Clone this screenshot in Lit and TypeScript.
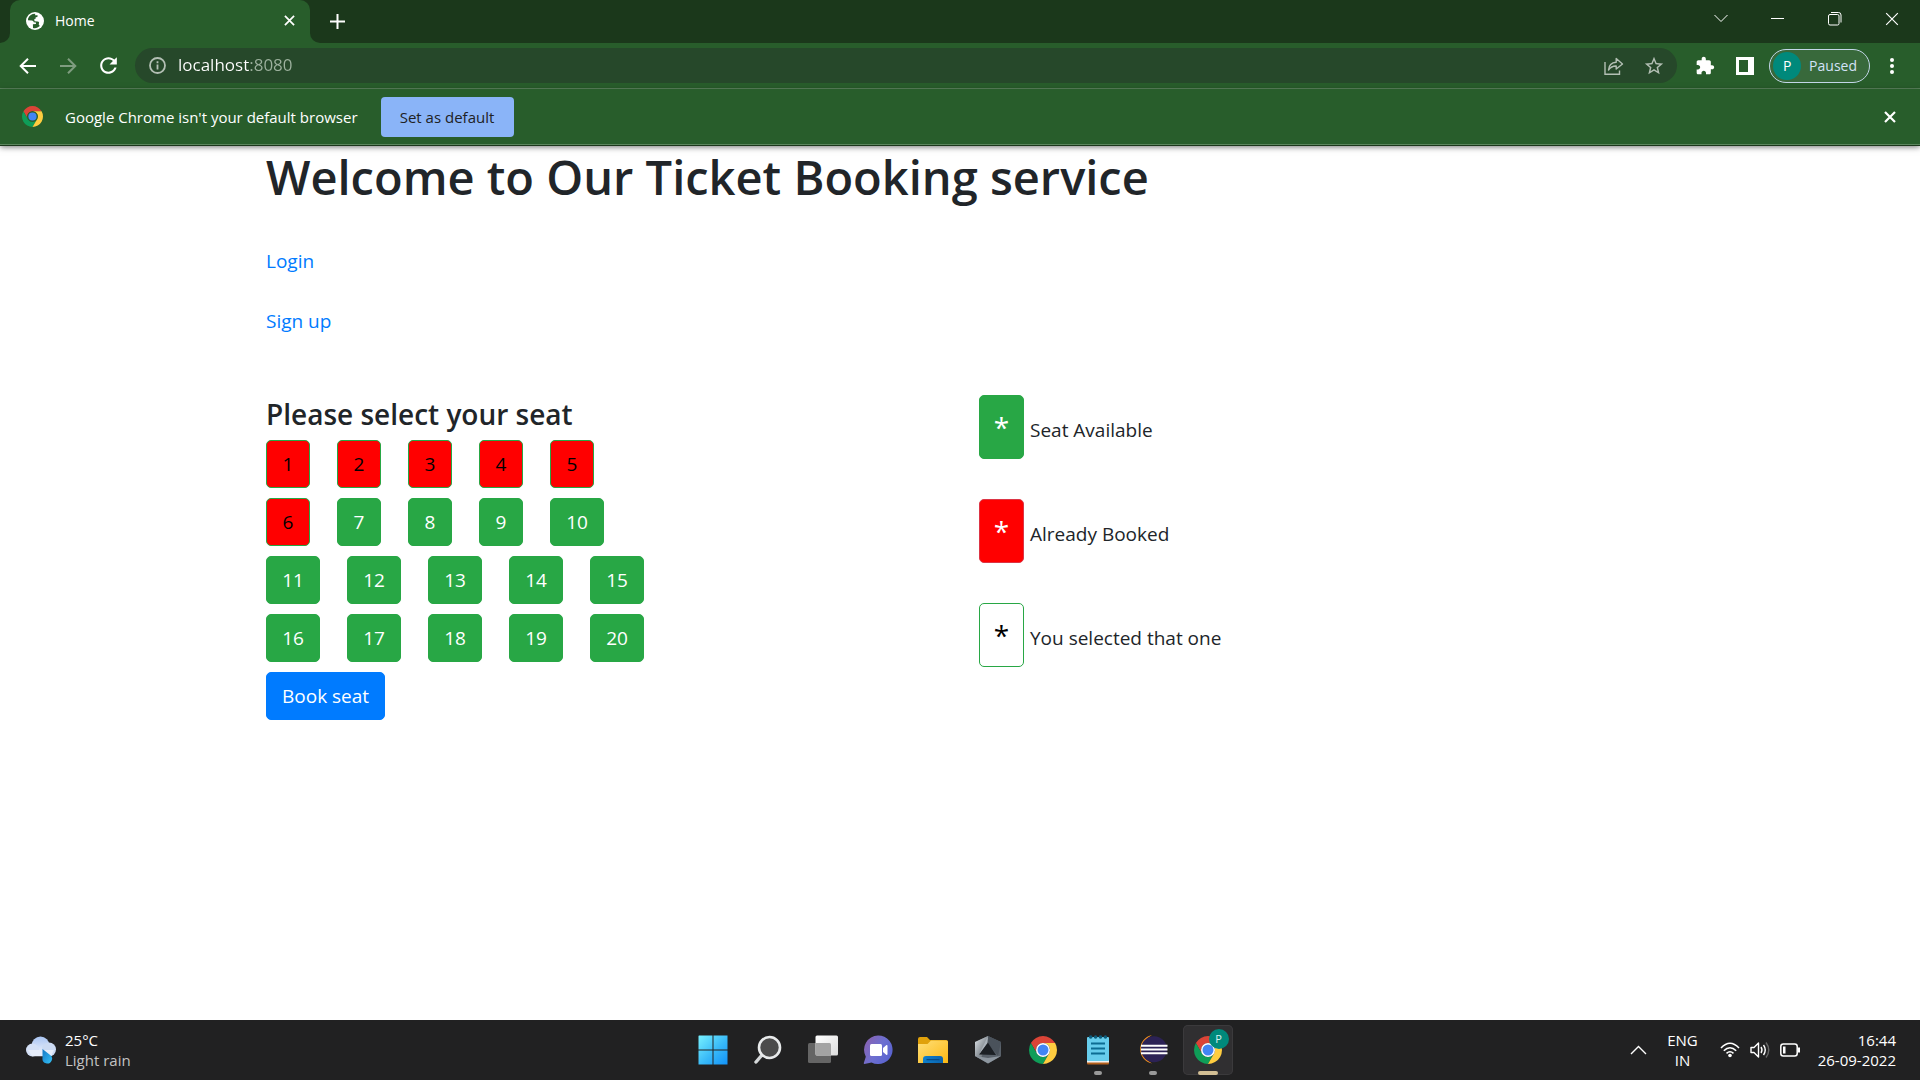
import { LitElement, html, svg, css, nothing } from "lit";
import { customElement, property, state } from "lit/decorators.js";

/* ---------- shared drawings ---------- */

const chromeLogo = (size: number, ringed: boolean) => html`
  <svg width=${size} height=${size} viewBox="0 0 24 24" aria-hidden="true">
    <path fill="#db4437" d="M12 6H22.39A12 12 0 0 0 1.61 6L6.8 15A6 6 0 0 1 12 6z" />
    <path fill="#0f9d58" d="M6.8 15L1.61 6A12 12 0 0 0 12 24L17.2 15A6 6 0 0 1 6.8 15z" />
    <path fill="#ffcd40" d="M17.2 15L12 24A12 12 0 0 0 22.39 6H12A6 6 0 0 1 17.2 15z" />
    <circle cx="12" cy="12" r="6" fill=${ringed ? "#fff" : "#285d2b"} />
    <circle cx="12" cy="12" r="4.7" fill="#4285f4" />
  </svg>
`;

const cross = (size: number, width: number) => html`
  <svg width=${size} height=${size} viewBox="0 0 12 12" fill="none" stroke="currentColor" stroke-width=${width} aria-hidden="true">
    <path d="M1 1L11 11M11 1L1 11" />
  </svg>
`;

/* ---------- browser window frame ---------- */

@customElement("browser-frame")
export class BrowserFrame extends LitElement {
  static styles = css`
    :host {
      display: block;
      color: #fff;
      background: #285d2b;
      font-family: "Open Sans", "Noto Sans", sans-serif;
      font-size: 14px;
      line-height: 20px;
    }
    button {
      font: inherit;
      color: inherit;
      background: none;
      border: 0;
      padding: 0;
      display: flex;
      align-items: center;
      justify-content: center;
    }
    svg {
      display: block;
      flex: none;
    }
    .strip {
      display: flex;
      height: 43px;
    }
    .stub {
      width: 10px;
      background: #1b381b;
      border-bottom-right-radius: 10px;
    }
    .slot {
      width: 300px;
      background: #1b381b;
    }
    .tab {
      height: 43px;
      box-sizing: border-box;
      display: flex;
      align-items: center;
      gap: 11px;
      padding: 0 11px 2px 16px;
      background: #285d2b;
      border-radius: 10px 10px 0 0;
    }
    .tab-title {
      flex: 1;
    }
    .tab-close {
      width: 20px;
      height: 20px;
    }
    .rest {
      flex: 1;
      display: flex;
      justify-content: space-between;
      background: #1b381b;
      border-bottom-left-radius: 10px;
    }
    .new-tab {
      width: 55px;
      height: 42px;
    }
    .window-controls {
      display: flex;
    }
    .window-controls button {
      width: 57px;
      height: 37px;
    }
    .toolbar {
      display: flex;
      align-items: center;
      height: 45px;
      padding: 0 11px 0 8px;
      border-bottom: 1px solid #5b855d;
    }
    .nav {
      width: 40px;
      height: 35px;
    }
    .nav.off {
      color: #7f9d80;
    }
    .omnibox {
      flex: 1;
      display: flex;
      align-items: center;
      height: 35px;
      margin: 0 8px 0 7px;
      padding-left: 12px;
      border-radius: 18px;
      background: #26482a;
      color: #b3bfb4;
    }
    .omnibox button {
      width: 40px;
      height: 35px;
    }
    .omnibox .info {
      width: 20px;
    }
    .omnibox .star {
      margin-right: 3px;
    }
    .address {
      flex: 1;
      min-width: 0;
      margin-left: 11px;
      padding: 0 0 2px;
      border: 0;
      outline: 0;
      font: 17px/26px "Open Sans", "Noto Sans", sans-serif;
      color: transparent;
      background: linear-gradient(to right, #fff 71px, #9db19e 71px);
      background-clip: text;
      -webkit-background-clip: text;
    }
    .profile {
      height: 34px;
      margin: 0 5px 0 4px;
      padding: 0 12px 0 3px;
      gap: 8px;
      border: 1px solid #c3d6e8;
      border-radius: 17px;
      background: #38693b;
      color: #d3e3f8;
      box-sizing: border-box;
    }
    .avatar {
      width: 28px;
      height: 28px;
      line-height: 28px;
      border-radius: 50%;
      background: #00897b;
      color: #fff;
      text-align: center;
    }
    .menu {
      width: 34px;
      height: 34px;
    }
    .notice {
      display: flex;
      align-items: center;
      height: 55px;
      padding: 0 20px 0 22px;
      border-bottom: 1px solid #5b855d;
      box-shadow: 0 1px 0 #1b381b, 0 2px 6px rgba(0, 0, 0, 0.55);
      font-size: 15px;
    }
    .notice-text {
      margin: 0 23px 0 22px;
    }
    .set-default {
      width: 133px;
      height: 40px;
      border-radius: 4px;
      background: #8ab4f8;
      color: #202124;
    }
    .dismiss {
      width: 20px;
      height: 20px;
      margin-left: auto;
    }
  `;

  @property() tabTitle = "Home";
  @property() address = "localhost:8080";
  @state() private noticeOpen = true;

  render() {
    return html`
      <div class="strip">
        <div class="stub"></div>
        <div class="slot">
          <div class="tab">
            <svg width="18" height="18" viewBox="0 0 18 18" aria-hidden="true">
              <circle cx="9" cy="9" r="9" fill="#fff" />
              <path fill="#285d2b" d="M9.2 1.8C6 1.7 3.2 3.6 2.1 6.4L2 8.3L5.9 8.4Q7.6 8.6 7.8 10.2L9.9 10.4L10 12.1L6.9 12.3L7 15.9C9.5 16.6 12 15.8 13.8 14.1L12.7 12.6L13.1 10.6Q12.9 9.5 11.6 9.4L8.5 9.3L8.3 7L9.6 6.7L9.7 5.2L11.4 4.9L11.6 3.3L9.1 3.2Z" />
            </svg>
            <span class="tab-title">${this.tabTitle}</span>
            <button class="tab-close" type="button" aria-label="Close tab">${cross(11, 1.9)}</button>
          </div>
        </div>
        <div class="rest">
          <button class="new-tab" type="button" aria-label="New tab">
            <svg width="15" height="15" viewBox="0 0 15 15" stroke="#fff" stroke-width="2"><path d="M7.5 0V15M0 7.5H15" /></svg>
          </button>
          <div class="window-controls">
            <button type="button" aria-label="Search tabs">
              <svg width="14" height="9" viewBox="0 0 14 9" fill="none" stroke="#fff"><path d="M.5 1L7 7.500L13.500 1" /></svg>
            </button>
            <button type="button" aria-label="Minimize">
              <svg width="13" height="1" viewBox="0 0 13 1"><rect width="13" height="1" fill="#fff" /></svg>
            </button>
            <button type="button" aria-label="Restore">
              <svg width="14" height="14" viewBox="0 0 14 14" fill="none" stroke="#fff">
                <rect x=".5" y="2.500" width="10.500" height="10.500" rx="1.500" />
                <path d="M3 .5H10.500Q13 .5 13 3V10.500" />
              </svg>
            </button>
            <button type="button" aria-label="Close window">${cross(14, 1)}</button>
          </div>
        </div>
      </div>

      <div class="toolbar">
        <button class="nav" type="button" aria-label="Back">
          <svg width="18" height="16" viewBox="0 0 18 16" fill="none" stroke="currentColor" stroke-width="2"><path d="M17 8H2M9 .7L1.700 8L9 15.300" /></svg>
        </button>
        <button class="nav off" type="button" aria-label="Forward">
          <svg width="18" height="16" viewBox="0 0 18 16" fill="none" stroke="currentColor" stroke-width="2"><path d="M1 8H16M9 .7L16.300 8L9 15.300" /></svg>
        </button>
        <button class="nav" type="button" aria-label="Reload">
          <svg width="25" height="25" viewBox="0 0 24 24" fill="#fff"><path d="M17.650 6.350C16.200 4.900 14.210 4 12 4c-4.420 0-7.990 3.580-7.990 8s3.570 8 7.990 8c3.730 0 6.840-2.550 7.730-6h-2.080c-.82 2.330-3.040 4-5.650 4-3.310 0-6-2.690-6-6s2.690-6 6-6c1.660 0 3.140.69 4.220 1.780L13 11h7V4l-2.350 2.350z" /></svg>
        </button>
        <div class="omnibox">
          <button class="info" type="button" aria-label="Site information">
            <svg width="17" height="17" viewBox="0 0 17 17" fill="none" stroke="currentColor" stroke-width="1.800">
              <circle cx="8.500" cy="8.500" r="7.500" />
              <path d="M8.500 7.500V12.500M8.500 4.300V6.200" />
            </svg>
          </button>
          <input class="address" type="text" aria-label="Address" spellcheck="false" .value=${this.address} />
          <button type="button" aria-label="Share">
            <svg width="20" height="18" viewBox="0 0 20 18" fill="none" stroke="currentColor" stroke-width="1.400">
              <path d="M1 5V17.200H15.500V13.500" />
              <path d="M4.500 13Q5 5.700 12.200 5.200V1.500L18.500 7L12.200 12V9Q7.500 8.800 4.500 13Z" stroke-linejoin="round" />
            </svg>
          </button>
          <button class="star" type="button" aria-label="Bookmark">
            <svg width="22" height="22" viewBox="0 0 24 24" fill="currentColor"><path d="M22 9.240l-7.190-.62L12 2 9.190 8.630 2 9.240l5.460 4.730L5.820 21 12 17.270 18.180 21l-1.630-7.030L22 9.240zM12 15.400l-3.760 2.270 1-4.280-3.320-2.880 4.380-.38L12 6.100l1.710 4.040 4.380.38-3.320 2.880 1 4.280L12 15.400z" /></svg>
          </button>
        </div>
        <button class="nav" type="button" aria-label="Extensions">
          <svg width="20" height="20" viewBox="0 0 24 24" fill="#fff"><path d="M20.500 11H19V7c0-1.100-.9-2-2-2h-4V3.500C13 2.120 11.880 1 10.500 1S8 2.120 8 3.500V5H4c-1.100 0-1.990.9-1.990 2v3.800H3.500c1.490 0 2.700 1.210 2.700 2.700s-1.210 2.700-2.700 2.700H2V20c0 1.100.9 2 2 2h3.800v-1.500c0-1.490 1.210-2.700 2.700-2.700 1.490 0 2.700 1.210 2.700 2.700V22H17c1.100 0 2-.9 2-2v-4h1.500c1.380 0 2.500-1.120 2.500-2.500S21.880 11 20.500 11z" /></svg>
        </button>
        <button class="nav" type="button" aria-label="Side panel">
          <svg width="18" height="18" viewBox="0 0 18 18"><path fill="#fff" fill-rule="evenodd" d="M0 0H18V18H0ZM3 3V15H12V3Z" /></svg>
        </button>
        <button class="profile" type="button">
          <span class="avatar">P</span>
          <span>Paused</span>
        </button>
        <button class="menu" type="button" aria-label="Menu">
          <svg width="4" height="16" viewBox="0 0 4 16" fill="#fff"><circle cx="2" cy="2" r="2" /><circle cx="2" cy="8" r="2" /><circle cx="2" cy="14" r="2" /></svg>
        </button>
      </div>

      ${this.noticeOpen
        ? html`
            <div class="notice">
              ${chromeLogo(21, false)}
              <span class="notice-text">Google Chrome isn't your default browser</span>
              <button class="set-default" type="button">Set as default</button>
              <button class="dismiss" type="button" aria-label="Dismiss" @click=${() => (this.noticeOpen = false)}>${cross(12, 2.2)}</button>
            </div>
          `
        : nothing}
    `;
  }
}

/* ---------- booking page ---------- */

type SeatState = "free" | "booked" | "selected";

@customElement("booking-page")
export class BookingPage extends LitElement {
  static styles = css`
    :host {
      display: block;
      color: #212529;
      font-family: "Open Sans", "Noto Sans", sans-serif;
      font-size: 19px;
      line-height: 30px;
    }
    .container {
      max-width: 1388px;
      margin: 0 auto;
      padding-top: 2px;
    }
    h1 {
      margin: 0;
      font-size: 47px;
      line-height: 60px;
      font-weight: 600;
    }
    .links {
      display: flex;
      flex-direction: column;
      align-items: flex-start;
      gap: 30px;
      margin: 39px 0 59px;
    }
    a {
      color: #007bff;
      text-decoration: none;
    }
    .columns {
      display: grid;
      grid-template-columns: 1fr 1fr;
      gap: 38px;
    }
    h2 {
      margin: 0 0 8px;
      padding-top: 1px;
      font-size: 28px;
      line-height: 36px;
      font-weight: 600;
    }
    .booking {
      display: flex;
      flex-direction: column;
      align-items: flex-start;
      gap: 10px;
    }
    .row {
      display: flex;
      gap: 27px;
    }
    button {
      height: 48px;
      box-sizing: border-box;
      padding: 0 15px;
      border: 1px solid #28a745;
      border-radius: 5px;
      background: #28a745;
      color: #fff;
      font: inherit;
      text-align: center;
    }
    .seat {
      min-width: 44px;
      padding: 0;
    }
    .seat.wide {
      min-width: 54px;
    }
    .booked {
      background: #f00;
      color: #000;
    }
    .selected {
      background: #fff;
      color: #000;
    }
    .submit {
      border-color: #007bff;
      background: #007bff;
    }
    .legend {
      display: flex;
      flex-direction: column;
      gap: 39px;
      margin: 0;
      padding: 0;
      list-style: none;
    }
    .entry {
      display: flex;
      align-items: center;
      gap: 6px;
      padding-bottom: 1px;
    }
    .entry label {
      padding-top: 6px;
    }
    .swatch {
      width: 45px;
      height: 64px;
      padding: 0;
      font-size: 28px;
    }
    .swatch.booked {
      border-color: #dc3545;
      color: #fff;
    }
  `;

  @state() private booked = new Set([1, 2, 3, 4, 5, 6]);
  @state() private chosen = new Set<number>();

  private stateOf(n: number): SeatState {
    return this.booked.has(n) ? "booked" : this.chosen.has(n) ? "selected" : "free";
  }

  private toggle(n: number) {
    if (this.booked.has(n)) return;
    const next = new Set(this.chosen);
    if (!next.delete(n)) next.add(n);
    this.chosen = next;
  }

  private book() {
    this.booked = new Set([...this.booked, ...this.chosen]);
    this.chosen = new Set();
  }

  private seat(n: number) {
    return html`<button
      class="seat ${n > 9 ? "wide" : ""} ${this.stateOf(n)}"
      type="button"
      @click=${() => this.toggle(n)}
    >${n}</button>`;
  }

  render() {
    const rows = [0, 5, 10, 15].map((start) => [1, 2, 3, 4, 5].map((i) => start + i));
    const legend: [SeatState, string][] = [
      ["free", "Seat Available"],
      ["booked", "Already Booked"],
      ["selected", "You selected that one"],
    ];
    return html`
      <main class="container">
        <h1>Welcome to Our Ticket Booking service</h1>
        <nav class="links">
          <a href="/login">Login</a>
          <a href="/signup">Sign up</a>
        </nav>
        <div class="columns">
          <section>
            <h2>Please select your seat</h2>
            <div class="booking">
              ${rows.map((row) => html`<div class="row">${row.map((n) => this.seat(n))}</div>`)}
              <button class="submit" type="button" @click=${this.book}>Book seat</button>
            </div>
          </section>
          <ul class="legend">
            ${legend.map(
              ([kind, label]) => html`
                <li class="entry">
                  <button class="swatch ${kind}" id=${kind} type="button">*</button>
                  <label for=${kind}>${label}</label>
                </li>
              `
            )}
          </ul>
        </div>
      </main>
    `;
  }
}

/* ---------- desktop task bar ---------- */

@customElement("task-bar")
export class TaskBar extends LitElement {
  static styles = css`
    :host {
      display: grid;
      grid-template-columns: 1fr auto 1fr;
      align-items: center;
      height: 60px;
      background: #212122;
      color: #fff;
      font-family: "Open Sans", "Noto Sans", sans-serif;
      font-size: 15px;
      line-height: 20px;
    }
    button {
      font: inherit;
      color: inherit;
      background: none;
      border: 0;
      padding: 0;
    }
    svg {
      display: block;
    }
    .weather {
      justify-self: start;
      display: flex;
      align-items: center;
      gap: 9px;
      margin-left: 26px;
      text-align: left;
    }
    .lines {
      display: flex;
      flex-direction: column;
    }
    .dim {
      color: #c3c3c3;
    }
    .apps {
      display: flex;
      gap: 5px;
    }
    .app {
      display: grid;
      grid-template-rows: 1fr 4px;
      justify-items: center;
      align-items: center;
      width: 50px;
      height: 50px;
      box-sizing: border-box;
      padding-top: 4px;
      border-radius: 5px;
    }
    .active {
      background: #302f31;
      box-shadow: inset 0 0 0 1px #3b3a3c;
    }
    .mark {
      width: 8px;
      height: 4px;
      border-radius: 2px;
      background: #999;
      visibility: hidden;
    }
    .running .mark {
      visibility: visible;
    }
    .active .mark {
      width: 20px;
      background: #d3bf94;
    }
    .picture {
      position: relative;
    }
    .badge {
      position: absolute;
      left: 15px;
      top: -7px;
      width: 20px;
      height: 20px;
      border-radius: 50%;
      background: #00897b;
      color: #d9f2ef;
      font-size: 11px;
      line-height: 20px;
      text-align: center;
    }
    .tray {
      justify-self: end;
      display: flex;
      align-items: center;
      margin-right: 24px;
    }
    .language {
      margin: 0 22px 0 20px;
      text-align: center;
    }
    .status {
      display: flex;
      align-items: center;
      gap: 10px;
      margin-right: 18px;
    }
    .clock {
      text-align: right;
    }
  `;

  private icons = [
    {
      name: "Start",
      art: svg`
        <defs><linearGradient id="win" x1="0" y1="0" x2="30" y2="30" gradientUnits="userSpaceOnUse"><stop stop-color="#7af3ff" /><stop offset=".55" stop-color="#38b9f8" /><stop offset="1" stop-color="#1090f8" /></linearGradient></defs>
        <path fill="url(#win)" d="M1 .5H14.500V14.500H.5V1ZM15.500 .5H29.500V14.500H15.500ZM.5 15.500H14.500V29.500H.5ZM15.500 15.500H29.500V29.500H15.500Z" />`,
    },
    {
      name: "Search",
      art: svg`
        <path d="M9 20L3 27" stroke="#d5d8da" stroke-width="3.400" stroke-linecap="round" />
        <circle cx="16.500" cy="12.500" r="10.500" fill="#4b4b4b" stroke="#e8eaeb" stroke-width="2.600" />`,
    },
    {
      name: "Task view",
      art: svg`
        <defs><linearGradient id="tv" x1="0" y1="0" x2="1" y2="1"><stop stop-color="#fff" /><stop offset="1" stop-color="#dcdcdc" /></linearGradient></defs>
        <rect x="0" y="8" width="23" height="20" rx="1.500" fill="#656565" />
        <rect x="7.500" y=".5" width="22.500" height="20" rx="1.500" fill="url(#tv)" />
        <path d="M7.500 8H21.500Q23 8 23 9.500V20.500H9Q7.500 20.500 7.500 19Z" fill="#a3a3a3" />`,
    },
    {
      name: "Chat",
      art: svg`
        <defs><linearGradient id="chat" x1="0" y1=".2" x2="1" y2=".8"><stop stop-color="#8a62b0" /><stop offset=".5" stop-color="#6d6fd0" /><stop offset="1" stop-color="#5661d0" /></linearGradient></defs>
        <path fill="url(#chat)" d="M15 .5A14.300 14.300 0 1 1 8.500 27.400L1.500 29Q.6 29 .8 28L2.800 21.700A14.300 14.300 0 0 1 15 .5Z" />
        <rect x="7" y="9" width="12" height="12" rx="1.500" fill="#fff" />
        <path fill="#fff" d="M20 13L23.500 10Q24.500 9.800 24.500 11V19Q24.500 20.200 23.500 20L20 17Z" />`,
    },
    {
      name: "Files",
      art: svg`
        <defs><linearGradient id="dir" x1="0" y1="0" x2="1" y2="1"><stop stop-color="#ffdf78" /><stop offset="1" stop-color="#fbb813" /></linearGradient><linearGradient id="dirb"><stop stop-color="#0f80cc" /><stop offset="1" stop-color="#0a63ae" /></linearGradient></defs>
        <path fill="#e0a10b" d="M0 4Q0 2 2 2H9L12 5H28Q30 5 30 7V12H0Z" />
        <path fill="url(#dir)" d="M0 9H9.500L13 5.500H28.500Q30 5.500 30 7V28H0Z" />
        <path fill="url(#dirb)" d="M5 28V24Q5 21 8 21H22Q25 21 25 24V28Z" />
        <path d="M9 24.700H21" stroke="#064a86" stroke-width="1.200" stroke-linecap="round" />`,
    },
    {
      name: "Armoury",
      art: svg`
        <defs><linearGradient id="arm" x1="0" y1="0" x2="1" y2="1"><stop stop-color="#dfe5ea" /><stop offset="1" stop-color="#4a525a" /></linearGradient></defs>
        <path fill="#59616a" d="M15 1L28 7V21L15 28.500L2 21V7Z" />
        <path fill="url(#arm)" d="M15 1L2 7V21L8 24L13 8Z" />
        <path fill="#4a525b" d="M15 1L28 7L25 21L13.500 7Z" />
        <path fill="#1c2025" d="M14.500 7L23 20L6 19.500Z" />
        <path fill="#aab2ba" d="M6 19.500L15 1L14.500 8Z" />
        <path fill="#8d969f" d="M2 21L15 23L28 21L15 28.500Z" />`,
    },
    { name: "Chrome", logo: true },
    {
      name: "Notepad",
      running: true,
      art: svg`
        <rect x="4" y="24" width="22" height="5.500" rx="1" fill="#b5611d" />
        <rect x="4" y="24" width="22" height="3.500" fill="#f1f1f1" />
        <rect x="4" y="2" width="22" height="24" rx="1" fill="#67cdec" />
        <g fill="#0d5c7c"><circle cx="7.700" cy="2" r="1.800" /><circle cx="12.600" cy="2" r="1.800" /><circle cx="17.500" cy="2" r="1.800" /><circle cx="22.400" cy="2" r="1.800" /></g>
        <path d="M8 8.500H22M8 13.500H22M8 18.500H22" stroke="#0d6c92" stroke-width="2" />`,
    },
    {
      name: "Eclipse",
      running: true,
      art: svg`
        <path fill="#f7941e" d="M14 0A14.500 14.500 0 0 0 14 28.500A16 16 0 0 1 14 0Z" />
        <circle cx="16" cy="14.300" r="13" fill="#2c2255" />
        <path d="M3 10.700H29.500M3 14.500H29.500M3 18.300H29.500" stroke="#fff" stroke-width="2" />`,
    },
    { name: "Chrome, profile P", logo: true, running: true, active: true },
  ];

  render() {
    return html`
      <button class="weather" type="button">
        <svg width="30" height="28" viewBox="0 0 30 28" aria-hidden="true">
          <defs>
            <linearGradient id="cloud" x1="0" y1="0" x2="0" y2="1"><stop stop-color="#a9c4f2" /><stop offset="1" stop-color="#eef3fc" /></linearGradient>
            <linearGradient id="drop" x1="0" y1="0" x2="1" y2="1"><stop stop-color="#1276c4" /><stop offset="1" stop-color="#35c2f6" /></linearGradient>
          </defs>
          <circle cx="14.500" cy="9.500" r="9" fill="url(#cloud)" />
          <circle cx="6.500" cy="14" r="6.500" fill="#d4e0f6" />
          <circle cx="23" cy="13.500" r="7" fill="#cbdaf3" />
          <path fill="#e6edf9" d="M2 14H28L25 20.200H6Z" />
          <path fill="url(#drop)" d="M16.500 13L23.500 18.500A4.800 4.800 0 1 1 16.500 22Z" />
        </svg>
        <span class="lines"><span>25°C</span><span class="dim">Light rain</span></span>
      </button>

      <div class="apps">
        ${this.icons.map(
          (icon) => html`
            <button
              class="app ${icon.running ? "running" : ""} ${icon.active ? "active" : ""}"
              type="button"
              aria-label=${icon.name}
            >
              <span class="picture">
                ${icon.logo
                  ? chromeLogo(28, true)
                  : html`<svg width="30" height="30" viewBox="0 0 30 30" fill="none" aria-hidden="true">${icon.art}</svg>`}
                ${icon.active ? html`<span class="badge">P</span>` : nothing}
              </span>
              <span class="mark"></span>
            </button>
          `
        )}
      </div>

      <div class="tray">
        <button type="button" aria-label="Hidden icons">
          <svg width="17" height="10" viewBox="0 0 17 10" fill="none" stroke="#fff" stroke-width="1.400"><path d="M1 9L8.500 1.500L16 9" /></svg>
        </button>
        <button class="language lines" type="button"><span>ENG</span><span>IN</span></button>
        <button class="status" type="button" aria-label="Network, sound and battery">
          <svg width="20" height="16" viewBox="0 0 20 16" fill="none" stroke="#fff" stroke-width="1.500">
            <path d="M1 6Q10-3.500 19 6M3.800 8.800Q10 2.500 16.200 8.800M6.500 11.400Q10 8 13.500 11.400" />
            <circle cx="10" cy="13.500" r="1.800" fill="#fff" stroke="none" />
          </svg>
          <svg width="20" height="18" viewBox="0 0 20 18" fill="none" stroke="#fff" stroke-width="1.400">
            <path d="M1 6.500H4L8.500 2V16L4 11.500H1Z" stroke-linejoin="round" />
            <path d="M11 6Q13 9 11 12M13.500 4Q17 9 13.500 14" />
            <path d="M16 1.500Q21.500 9 16 16.500" stroke="#666" />
          </svg>
          <svg width="20" height="14" viewBox="0 0 20 14" fill="none" stroke="#fff" stroke-width="1.500">
            <rect x=".8" y="1" width="16.400" height="12" rx="2.500" />
            <rect x="3" y="3.500" width="2.500" height="7" fill="#fff" stroke="none" />
            <path d="M19 4.500V9.500" stroke-width="2" />
          </svg>
        </button>
        <button class="clock lines" type="button"><span>16:44</span><span>26-09-2022</span></button>
      </div>
    `;
  }
}

@customElement("app-root")
export class AppRoot extends LitElement {
  static styles = css`
    :host {
      display: flex;
      flex-direction: column;
      min-height: 100vh;
      background: #fff;
    }
    .frame {
      position: relative;
      z-index: 1;
    }
    .page {
      flex: 1;
    }
  `;

  render() {
    return html`
      <browser-frame class="frame"></browser-frame>
      <booking-page class="page"></booking-page>
      <task-bar></task-bar>
    `;
  }
}
